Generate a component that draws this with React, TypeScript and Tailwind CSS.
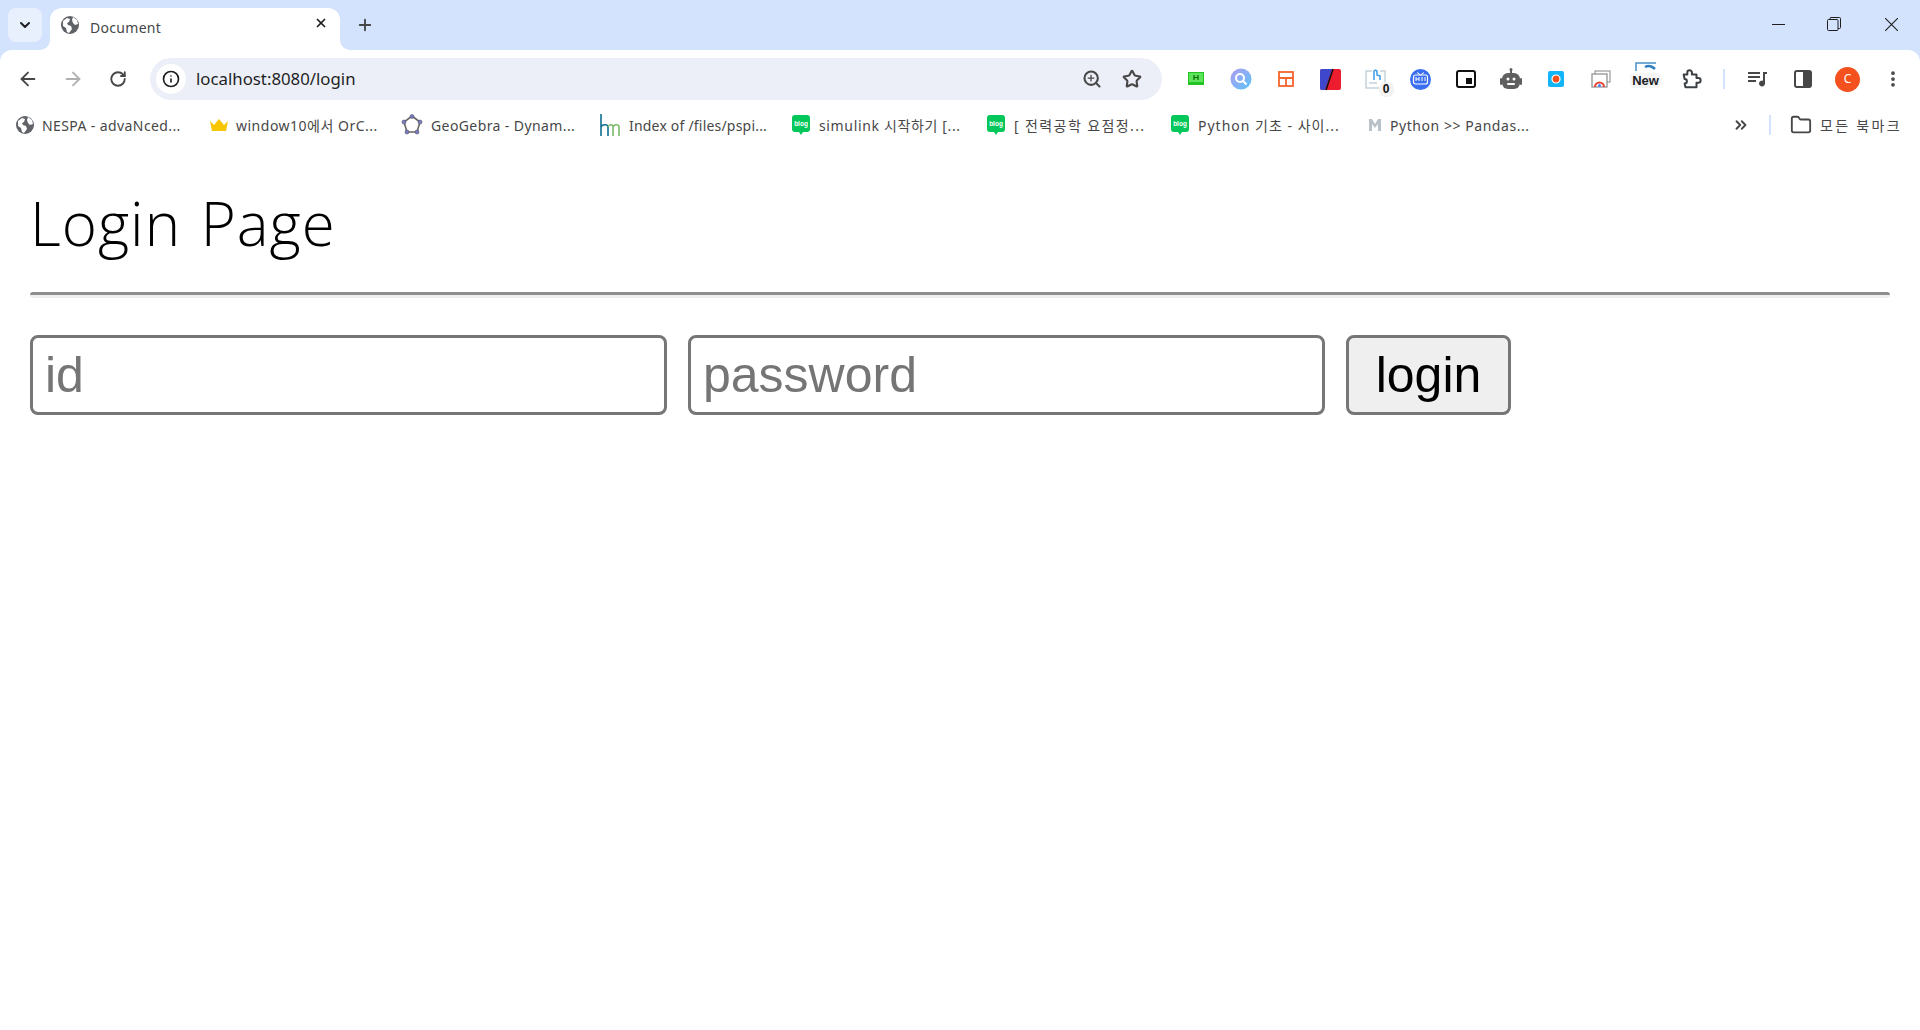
import { ArrowLeft, ArrowRight, ChevronDown, ChevronsRight, Folder, Info, MoreVertical, Plus, RotateCw, Search, Star, X } from 'lucide-react';
import type { ReactNode } from 'react';

const uiFont = "font-['Noto_Sans','Noto_Sans_CJK_KR',sans-serif]";

const Globe = ({ className }: { className: string }) => (
  <svg viewBox="0 0 18 18" className={className}>
    <circle cx="9" cy="9" r="9" fill="#5f6368" />
    <path d="M2 5l4-3 3 1-1 3-2 1 1 2 3 1 1 3-3 4-2-1-1-4-3-2zM12 1l4 3 1 4-3 1-2-2-1-3z" fill="#fff" />
  </svg>
);

const BlogIcon = () => (
  <svg viewBox="0 0 20 22" className="h-[22px] w-5 shrink-0 tracking-normal">
    <path d="M4 1h12a3 3 0 0 1 3 3v11a3 3 0 0 1-3 3h-4l-2 3-2-3H4a3 3 0 0 1-3-3V4a3 3 0 0 1 3-3z" fill="#03c75a" />
    <text x="10" y="12" textAnchor="middle" fontSize="6.5" fontWeight="700" fill="#fff" fontFamily="Liberation Sans">blog</text>
  </svg>
);

const Crown = () => (
  <svg viewBox="0 0 18 14" className="h-[14px] w-[18px] shrink-0">
    <path d="M0 3l4 4 5-6 5 6 4-4-2 10H2z" fill="#f7c600" />
  </svg>
);

const GeoGebra = () => (
  <svg viewBox="0 0 22 22" className="ml-[-2px] h-[22px] w-[22px] shrink-0">
    <path d="M11 2l8 6-3 10H6L3 8z" fill="none" stroke="#666" strokeWidth="1.6" />
    <g fill="#7a78c8" stroke="#555" strokeWidth="0.6">
      <circle cx="11" cy="2.5" r="2" />
      <circle cx="19" cy="8" r="2" />
      <circle cx="16" cy="18" r="2" />
      <circle cx="6" cy="18" r="2" />
      <circle cx="3" cy="8" r="2" />
    </g>
  </svg>
);

const HmIcon = () => (
  <svg viewBox="0 0 22 22" className="ml-[-1px] h-[22px] w-[22px] shrink-0" fill="none" strokeWidth="1.6">
    <path d="M2 0v22M2 13c1-3 7-3 7 0v9" stroke="#0f6f8f" />
    <path d="M9 13c1-3 5-3 5 0v9M14 13c1-3 6-3 6 0v9" stroke="#7cb96a" />
  </svg>
);

const MIcon = () => (
  <svg viewBox="0 0 14 14" className="h-[14px] w-[14px] shrink-0">
    <path d="M1 1h3l3 5 3-5h3v12h-3V6L7 10 4 6v7H1z" fill="#b9c2c9" />
  </svg>
);

const bookmarks: { icon: ReactNode; label: string; width: string; spacing: string }[] = [
  { icon: <Globe className="h-[18px] w-[18px] shrink-0" />, label: 'NESPA - advaNced...', width: 'w-[194px]', spacing: 'tracking-[0.4px]' },
  { icon: <Crown />, label: 'window10에서 OrC...', width: 'w-[193px]', spacing: 'tracking-[0.5px]' },
  { icon: <GeoGebra />, label: 'GeoGebra - Dynam...', width: 'w-[197px]', spacing: 'tracking-[0.4px]' },
  { icon: <HmIcon />, label: 'Index of /files/pspi...', width: 'w-[191px]', spacing: 'tracking-[0.2px]' },
  { icon: <BlogIcon />, label: 'simulink 시작하기 [...', width: 'w-[195px]', spacing: 'tracking-[0.65px]' },
  { icon: <BlogIcon />, label: '[ 전력공학 요점정...', width: 'w-[184px]', spacing: 'tracking-[1.4px]' },
  { icon: <BlogIcon />, label: 'Python 기초 - 사이...', width: 'w-[198px]', spacing: 'tracking-[1px]' },
  { icon: <MIcon />, label: 'Python >> Pandas...', width: 'w-[172px]', spacing: 'tracking-[0.55px]' },
];

const extensions: ReactNode[] = [
  <svg key="a" viewBox="0 0 16 14" className="h-[14px] w-4">
    <rect x="0.5" y="0.5" width="15" height="10" fill="#5be35b" stroke="#22c322" />
    <rect x="0" y="11" width="16" height="2" fill="#22c322" />
    <path d="M6 3v5M10 3v5M6 5.500h4" stroke="#0a6a0a" strokeWidth="1.200" />
  </svg>,
  <svg key="b" viewBox="0 0 22 22" className="h-[22px] w-[22px]">
    <defs>
      <linearGradient id="lens" x1="0" y1="0" x2="1" y2="1">
        <stop offset="0" stopColor="#b09cf0" />
        <stop offset="1" stopColor="#5cc4fa" />
      </linearGradient>
    </defs>
    <circle cx="11" cy="11" r="10.500" fill="url(#lens)" />
    <circle cx="10" cy="10" r="4" fill="none" stroke="#fff" strokeWidth="2" />
    <path d="M13 13l3.500 3.500" stroke="#fff" strokeWidth="2" />
  </svg>,
  <svg key="c" viewBox="0 0 16 16" className="h-4 w-4" fill="none" stroke="#f4642c" strokeWidth="1.800">
    <rect x="1" y="1" width="14" height="14" />
    <path d="M1 7h14M8 7v8" />
  </svg>,
  <svg key="d" viewBox="0 0 21 21" className="h-[21px] w-[21px]">
    <rect width="21" height="21" rx="2" fill="#ed1c2e" />
    <path d="M0 2a2 2 0 0 1 2-2h10L5 21H2a2 2 0 0 1-2-2z" fill="#3f48cc" />
    <path d="M13 0L6 21" stroke="#111" strokeWidth="1.500" />
  </svg>,
  <div key="e" className="relative h-[22px] w-[22px]">
    <svg viewBox="0 0 22 22" className="h-[22px] w-[22px]" fill="none">
      <path d="M7 3H1v17h19V3h-5" stroke="#c5d2dc" strokeWidth="1.500" />
      <path d="M9 12V3a2 2 0 0 1 3 0v4l3 1v4" stroke="#3d9be9" strokeWidth="1.500" />
      <path d="M4 15h8" stroke="#c5d2dc" strokeWidth="1.500" />
    </svg>
    <span className="absolute right-[-7px] bottom-[-7px] rounded-md bg-[#f3f3f3] px-[4px] font-['Liberation_Sans',sans-serif] text-[12px] leading-[15px] font-bold text-[#111]">0</span>
  </div>,
  <svg key="f" viewBox="0 0 21 21" className="h-[21px] w-[21px]">
    <circle cx="10.500" cy="10.500" r="10.500" fill="#3a6ff0" />
    <rect x="3.500" y="6" width="14" height="9" rx="2" fill="none" stroke="#fff" strokeWidth="1.200" />
    <path d="M7 3.500l3.500 2.500 3.500-2.500" fill="none" stroke="#fff" />
    <path d="M6 8v4M9 8v4M6 10h3M12 8v4M15 8v4" stroke="#fff" />
  </svg>,
  <svg key="g" viewBox="0 0 20 18" className="h-[18px] w-5" fill="none">
    <rect x="1" y="1" width="18" height="16" rx="2" stroke="#111" strokeWidth="2" />
    <rect x="10" y="8" width="6" height="6" fill="#111" />
  </svg>,
  <svg key="h" viewBox="0 0 22 24" className="h-6 w-[22px]">
    <circle cx="11" cy="2.500" r="1.500" fill="#5f5f5f" />
    <rect x="10" y="3" width="2" height="4" fill="#5f5f5f" />
    <rect x="2" y="6" width="18" height="16" rx="6" fill="#5f5f5f" />
    <rect x="0" y="11" width="2" height="7" rx="1" fill="#5f5f5f" />
    <rect x="20" y="11" width="2" height="7" rx="1" fill="#5f5f5f" />
    <circle cx="8" cy="12" r="1.500" fill="#fff" />
    <circle cx="14" cy="12" r="1.500" fill="#fff" />
    <rect x="7" y="16" width="8" height="2" rx="1" fill="#fff" />
  </svg>,
  <svg key="i" viewBox="0 0 16 16" className="h-4 w-4">
    <rect width="16" height="16" rx="2" fill="#12b5f5" />
    <circle cx="8" cy="8" r="4" fill="#f4511e" stroke="#fff" strokeWidth="1.200" />
  </svg>,
  <svg key="j" viewBox="0 0 20 18" className="h-[18px] w-5" fill="none">
    <rect x="4" y="1" width="15" height="11" stroke="#9a9a9a" strokeWidth="1.200" />
    <rect x="1" y="4" width="15" height="13" fill="#fff" stroke="#8a8a8a" strokeWidth="1.200" />
    <path d="M4 17a4.500 4.500 0 0 1 9 0" stroke="#ea4335" strokeWidth="2" />
    <circle cx="8.500" cy="15.500" r="1.500" fill="#4285f4" />
  </svg>,
  <div key="k" className="relative flex h-[34px] w-[30px] flex-col items-center">
    <svg viewBox="0 0 22 10" className="h-[10px] w-[22px]" fill="none">
      <path d="M1 9V1h20" stroke="#4a90c8" strokeWidth="1.500" />
      <path d="M10 5c4-2 7-1 10 2" stroke="#2d7fc1" strokeWidth="2.500" />
    </svg>
    <span className="mt-[1px] rounded-sm bg-[#f5f5f5] px-[2px] font-['Liberation_Sans',sans-serif] text-[13px] leading-[15px] font-bold text-[#202124]">New</span>
  </div>,
  <svg key="l" viewBox="0 0 24 24" className="h-[22px] w-[22px]" fill="none" stroke="#3c4043" strokeWidth="2.200" strokeLinejoin="round">
    <path d="M4 7h4V5a2.500 2.500 0 0 1 5 0v2h5v4h2a2.500 2.500 0 0 1 0 5h-2v5H6l-1-4a2.500 2.500 0 0 0 0-5z" />
  </svg>,
];

const App = () => {
  return (
    <div className={`min-h-screen bg-white ${uiFont}`}>
      <div className="flex h-[50px] bg-[#d3e3fd]">
        <div className="mt-2 ml-2 flex h-[34px] w-[34px] items-center justify-center rounded-lg bg-[#e8effd]">
          <ChevronDown className="h-4 w-4 text-[#1f1f1f]" strokeWidth={3} />
        </div>
        <div className="relative mt-2 ml-2 flex h-[42px] w-[290px] items-start rounded-t-xl bg-white pt-[7px] pr-[11px] pl-[11px]">
          <svg viewBox="0 0 10 10" className="absolute bottom-0 left-[-10px] h-[10px] w-[10px]">
            <path d="M10 0v10H0a10 10 0 0 0 10-10z" fill="#fff" />
          </svg>
          <svg viewBox="0 0 10 10" className="absolute right-[-10px] bottom-0 h-[10px] w-[10px]">
            <path d="M0 0v10H10A10 10 0 0 1 0 0z" fill="#fff" />
          </svg>
          <Globe className="mt-[1px] h-[18px] w-[18px] shrink-0" />
          <span className="ml-[11px] flex-1 text-[14px] leading-[26px] tracking-[0.3px] text-[#45474a]">Document</span>
          <X className="mt-[1px] mr-[1px] h-[14px] w-[14px] text-[#1f1f1f]" strokeWidth={3} />
        </div>
        <div className="mt-[8px] ml-[15px] flex h-[34px] w-[20px] items-center justify-center">
          <Plus className="h-[18px] w-[18px] text-[#444746]" strokeWidth={2.500} />
        </div>
        <div className="ml-auto flex h-[48px] items-center">
          <div className="flex w-[56px] justify-center">
            <svg viewBox="0 0 13 13" className="h-[13px] w-[13px]" stroke="#1f1f1f">
              <path d="M0 6.500h13" />
            </svg>
          </div>
          <div className="flex w-[56px] justify-center">
            <svg viewBox="0 0 14 14" className="h-[14px] w-[14px]" fill="none" stroke="#1f1f1f">
              <rect x="0.500" y="2.500" width="10.500" height="11" rx="1" />
              <path d="M3 2.500V1.500a1 1 0 0 1 1-1h8.500a1 1 0 0 1 1 1v9a1 1 0 0 1-1 1H11" />
            </svg>
          </div>
          <div className="flex w-[58px] justify-center">
            <svg viewBox="0 0 13 13" className="h-[13px] w-[13px]" stroke="#1f1f1f" strokeWidth="1.100">
              <path d="M0 0l13 13M13 0L0 13" />
            </svg>
          </div>
        </div>
      </div>

      <div className="bg-[#d3e3fd]">
        <div className="flex h-[58px] items-center rounded-t-xl bg-white pl-[5px]">
          <div className="flex w-[45px] justify-center">
            <ArrowLeft className="h-[22px] w-[22px] text-[#474747]" strokeWidth={2} />
          </div>
          <div className="flex w-[45px] justify-center">
            <ArrowRight className="h-[22px] w-[22px] text-[#b0b0b0]" strokeWidth={2} />
          </div>
          <div className="flex w-[45px] justify-center">
            <RotateCw className="h-[18px] w-[18px] text-[#474747]" strokeWidth={2.500} />
          </div>
          <div className="ml-[10px] flex h-[42px] w-[1012px] items-center rounded-full bg-[#eceff8] pr-[20px] pl-[6px]">
            <div className="flex h-[30px] w-[30px] items-center justify-center rounded-full bg-white">
              <Info className="h-[18px] w-[18px] text-[#1f1f1f]" strokeWidth={2.200} />
            </div>
            <span className="ml-[10px] flex-1 text-[16.8px] text-[#1f1f1f]">localhost:8080/login</span>
            <div className="relative mr-[20px] h-5 w-5">
              <Search className="h-5 w-5 text-[#474747]" strokeWidth={2.500} />
              <Plus className="absolute top-[4px] left-[4px] h-[10px] w-[10px] text-[#474747]" strokeWidth={3} />
            </div>
            <Star className="h-5 w-5 text-[#474747]" strokeWidth={2.500} />
          </div>
          <div className="ml-[11px] flex items-center">
            {extensions.map((icon, index) => (
              <div key={index} className="flex h-[40px] w-[45px] items-center justify-center">
                {icon}
              </div>
            ))}
          </div>
          <div className="ml-[10px] h-[20px] w-[2px] bg-[#d3e3fd]" />
          <div className="ml-[10px] flex items-center">
            <div className="flex w-[45px] justify-center">
              <svg viewBox="0 0 20 16" className="h-4 w-5" fill="#474747">
                <rect x="0" y="1" width="12" height="2" />
                <rect x="0" y="5" width="12" height="2" />
                <rect x="0" y="9" width="8" height="2" />
                <path d="M15 1h4v2h-2v9.500a3 3 0 1 1-2-2.800z" />
              </svg>
            </div>
            <div className="flex w-[45px] justify-center">
              <svg viewBox="0 0 18 18" className="h-[18px] w-[18px]">
                <rect x="1" y="1" width="16" height="16" rx="2" fill="#fff" stroke="#474747" strokeWidth="2" />
                <rect x="9" y="1" width="8" height="16" fill="#474747" />
              </svg>
            </div>
            <div className="flex w-[45px] justify-center">
              <div className="flex h-[25px] w-[25px] items-center justify-center rounded-full bg-[#f4511e] text-[12px] text-white">C</div>
            </div>
            <div className="flex w-[45px] justify-center">
              <MoreVertical className="h-5 w-5 text-[#474747]" strokeWidth={2.500} />
            </div>
          </div>
        </div>
      </div>

      <div className="flex h-[34px] items-center pl-[16px] text-[14px] text-[#474747]">
        {bookmarks.map((bookmark) => (
          <div key={bookmark.label} className={`flex items-center gap-2 whitespace-nowrap ${bookmark.width} ${bookmark.spacing}`}>
            {bookmark.icon}
            <span>{bookmark.label}</span>
          </div>
        ))}
        <div className="ml-[186px] flex w-[30px] justify-center">
          <ChevronsRight className="h-[18px] w-[18px] text-[#474747]" strokeWidth={2.500} />
        </div>
        <div className="ml-[13px] h-[20px] w-[2px] bg-[#d3e3fd]" />
        <Folder className="ml-[19px] h-[22px] w-[22px] text-[#474747]" strokeWidth={2} />
        <span className="ml-[8px] whitespace-nowrap tracking-[2.300px]">모든 북마크</span>
      </div>

      <main className="px-[30px]">
        <h1 className="pt-[41px] font-['Open_Sans',sans-serif] text-[60px] leading-[80px] font-[350] tracking-[1px] text-black [word-spacing:3px]">Login Page</h1>
        <hr className="mt-[29px] h-[6px] rounded-sm border-t-[3px] border-[#8e8e8e] bg-[#efefef]" />
        <form className="mt-[37px] flex gap-[21px] font-['Liberation_Sans',sans-serif] text-[50px]">
          <input placeholder="id" className="h-[80px] w-[637px] rounded-lg border-[3px] border-[#767676] px-3 placeholder:text-[#757575]" />
          <input placeholder="password" className="h-[80px] w-[637px] rounded-lg border-[3px] border-[#767676] px-3 placeholder:text-[#757575]" />
          <button type="button" className="h-[80px] w-[165px] rounded-lg border-[3px] border-[#767676] bg-[#efefef] text-black">login</button>
        </form>
      </main>
    </div>
  );
};

export default App;
